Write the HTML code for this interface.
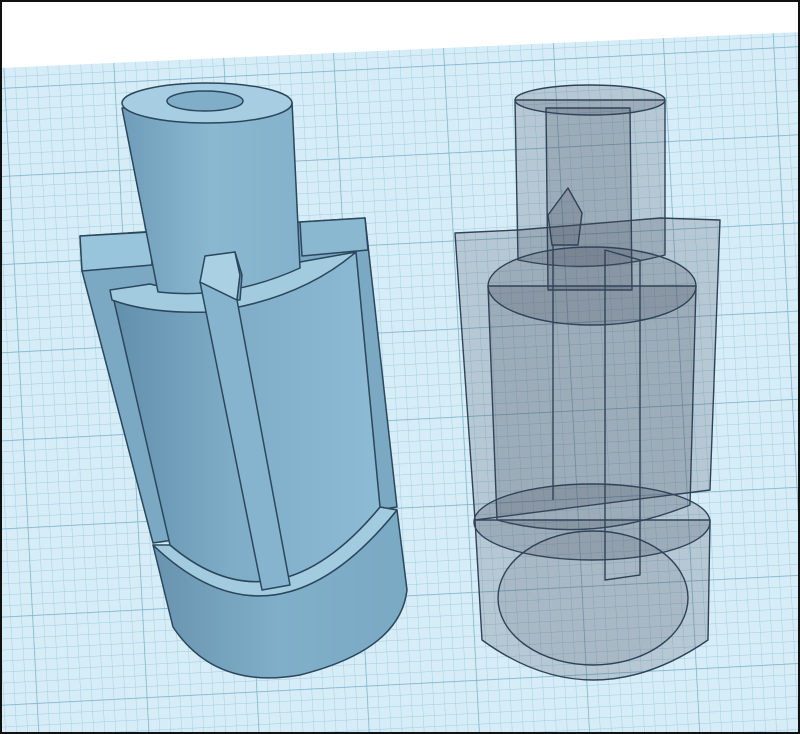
<!DOCTYPE html>
<html><head><meta charset="utf-8"><style>
html,body{margin:0;padding:0;background:#fff}
svg{display:block}
</style></head><body>
<svg width="800" height="734" viewBox="0 0 800 734" xmlns="http://www.w3.org/2000/svg">
<defs>
<pattern id="g" width="11" height="11" patternUnits="userSpaceOnUse" patternTransform="rotate(-3)">
<rect width="11" height="11" fill="#d6ecf6"/>
<path d="M0 0H11M0 0V11" stroke="#a2cde0" stroke-width="0.9"/>
</pattern>
<pattern id="G" width="110" height="88" patternUnits="userSpaceOnUse" patternTransform="rotate(-3)">
<path d="M0 0H110M0 0V88" stroke="#7fb1c9" stroke-width="1.4" fill="none"/>
</pattern>
<linearGradient id="cyl" x1="0" x2="1" y1="0" y2="0">
<stop offset="0" stop-color="#628fab"/><stop offset="0.45" stop-color="#7fadc8"/><stop offset="1" stop-color="#8dbad4"/>
</linearGradient>
<linearGradient id="tube" x1="0" x2="1">
<stop offset="0" stop-color="#6f9cb8"/><stop offset="0.5" stop-color="#8ab8d1"/><stop offset="1" stop-color="#84b2cc"/>
</linearGradient>
<linearGradient id="base" x1="0" x2="1">
<stop offset="0" stop-color="#6993ae"/><stop offset="0.5" stop-color="#80afca"/><stop offset="1" stop-color="#7aa9c4"/>
</linearGradient>
</defs>
<rect width="800" height="734" fill="#fff"/>
<polygon points="0,68 800,32 800,734 0,734" fill="url(#g)"/>
<polygon points="0,68 800,32 800,734 0,734" fill="url(#G)"/>
<g stroke="#2a475b" stroke-width="1.5" stroke-linejoin="round">
<polygon points="80,236 300,222 365,218 397,507 153,543 82,271" fill="#7ba8c2"/>
<polygon points="80,236 150,232 152,265 82,271" fill="#98c5dc"/>
<polygon points="300,222 365,218 368,250 302,256" fill="#8ab8d1"/>
<!-- base -->
<path d="M153,545 Q275,662 397,510 L407,590 Q400,650 300,675 Q215,690 173,627 Z" fill="url(#base)"/>
<path d="M153,545 L170,545 Q275,634 380,507 L397,510 Q275,662 153,545 Z" fill="#a3cbe0"/>
<!-- middle cylinder -->
<path d="M112,292 Q230,320 356,252 L380,507 Q275,634 170,545 Z" fill="url(#cyl)"/>
<path d="M110,290 L150,284 Q190,296 300,262 L356,252 Q300,300 210,312 Q150,314 112,300 Z" fill="#a3cbe0"/>
<!-- tube -->
<path d="M122,108 L158,292 Q230,300 300,268 L292,102 Z" fill="url(#tube)"/>
<ellipse cx="207" cy="103" rx="85" ry="20" fill="#a6cde1"/>
<ellipse cx="205" cy="101" rx="38" ry="10" fill="#80adc8"/>
<!-- fin -->
<polygon points="200,282 237,300 290,585 262,590" fill="#86b4ce"/>
<polygon points="205,256 235,252 240,275 237,300 200,282" fill="#a9d0e3"/>
<polygon points="235,252 242,275 240,300 237,300 240,275" fill="#7ba8c2"/>
</g>
<g stroke="#2f4358" stroke-width="1.4" fill="rgba(70,75,90,0.22)" stroke-linejoin="round">
<polygon points="455,233 518,230 660,218 720,220 710,490 475,520"/>
<path d="M515,100 L518,260 Q590,275 665,255 L665,100 Z"/>
<ellipse cx="590" cy="100" rx="75" ry="15"/>
<path d="M546,108 L548,290 L632,290 L630,108 Z"/>
<path d="M488,286 L497,520 Q590,545 690,505 L696,286 Z"/>
<ellipse cx="592" cy="286" rx="104" ry="39"/>
<path d="M475,520 L482,640 Q592,720 708,640 L710,520 Z"/>
<ellipse cx="592" cy="522" rx="118" ry="38"/>
<ellipse cx="593" cy="598" rx="95" ry="67" fill="rgba(70,75,90,0.12)"/>
<polygon points="548,215 568,188 582,213 578,245 552,245"/>
<path d="M605,250 L605,580 L640,575 L640,260 Z" fill="none"/>
<path d="M553,245 L553,500" fill="none"/>
</g>
<rect x="1" y="1" width="798" height="732" fill="none" stroke="#111" stroke-width="2"/>
</svg>
</body></html>
